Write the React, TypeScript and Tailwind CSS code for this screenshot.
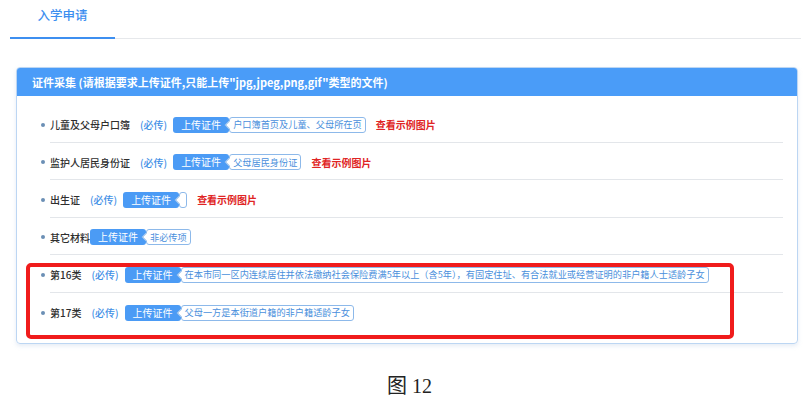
type Row = {
  label: string;
  required?: boolean;
  tip?: string;
  example?: boolean;
};

const rows: Row[] = [
  { label: "儿童及父母户口簿", required: true, tip: "户口簿首页及儿童、父母所在页", example: true },
  { label: "监护人居民身份证", required: true, tip: "父母居民身份证", example: true },
  { label: "出生证", required: true, tip: "", example: true },
  { label: "其它材料", tip: "非必传项" },
  {
    label: "第16类",
    required: true,
    tip: "在本市同一区内连续居住并依法缴纳社会保险费满5年以上（含5年），有固定住址、有合法就业或经营证明的非户籍人士适龄子女",
  },
  { label: "第17类", required: true, tip: "父母一方是本街道户籍的非户籍适龄子女" },
];

function Tip({ text }: { text: string }) {
  return (
    <span className="relative flex h-[16px] items-center rounded-[3px] border border-[#8db9ea] bg-white px-[3px] text-[9.2px] leading-none text-[#4a8fdc] whitespace-nowrap">
      <span className="absolute left-[-4px] top-1/2 h-[6px] w-[6px] -translate-y-1/2 rotate-45 border-b border-l border-[#8db9ea] bg-white" />
      <span className="relative">{text}</span>
    </span>
  );
}

function DocRow({ row, last }: { row: Row; last: boolean }) {
  return (
    <li
      className={`flex h-[37.5px] items-center pt-[3px] ${last ? "" : "border-b border-[#e3e6ea]"}`}
    >
      <span className="-ml-[9px] mr-[5px] h-[4px] w-[4px] rounded-full bg-[#6b8fb5]" />
      <span className="text-[10px] font-medium text-[#2e2e2e]">{row.label}</span>
      {row.required && (
        <span className="ml-[10px] text-[10px] font-medium text-[#3f8fe6]">(必传)</span>
      )}
      <span
        className={`${row.required ? "ml-[6px]" : "ml-0"} flex h-[16px] items-center rounded-[3px] bg-[#4b9bf5] px-[8px] text-[10px] leading-none text-white`}
      >
        上传证件
      </span>
      <Tip text={row.tip ?? ""} />
      {row.example && (
        <span className="ml-[10px] text-[10px] font-bold text-[#e02424]">查看示例图片</span>
      )}
    </li>
  );
}

export default function App() {
  return (
    <div className="relative h-[413px] w-[811px] overflow-hidden bg-white font-['Noto_Sans_CJK_SC',sans-serif]">
      <div className="mx-[10px] flex h-[39px] border-b border-[#e6e8eb]">
        <div className="-mb-px flex w-[105px] items-center justify-center border-b-2 border-[#3d8ff0] pb-[7px] text-[12.5px] font-medium text-[#3d8ff0]">
          入学申请
        </div>
      </div>

      <div className="ml-[16px] mr-[13px] mt-[28px] overflow-hidden rounded-[4px] border border-[#bcd6f3] shadow-[0_2px_4px_rgba(180,200,225,0.35)]">
        <div className="flex h-[28px] items-center bg-[#4a9cf8] px-[15px] text-[11px] font-bold text-white">
          证件采集 (请根据要求上传证件,只能上传"jpg,jpeg,png,gif"类型的文件)
        </div>
        <ul className="ml-[33px] mr-[14px] pb-[13px] pt-[9px]">
          {rows.map((r, i) => (
            <DocRow key={r.label} row={r} last={i === rows.length - 1} />
          ))}
        </ul>
      </div>

      <div className="mt-[29px] flex justify-center pl-[8px] font-['Liberation_Serif','Noto_Sans_CJK_SC',serif] text-[20px] leading-[26px] text-[#222]">
        图 12
      </div>

      <div className="absolute left-[26px] top-[263px] h-[76px] w-[708px] rounded-[5px] border-4 border-[#f01c1c]" />
    </div>
  );
}
